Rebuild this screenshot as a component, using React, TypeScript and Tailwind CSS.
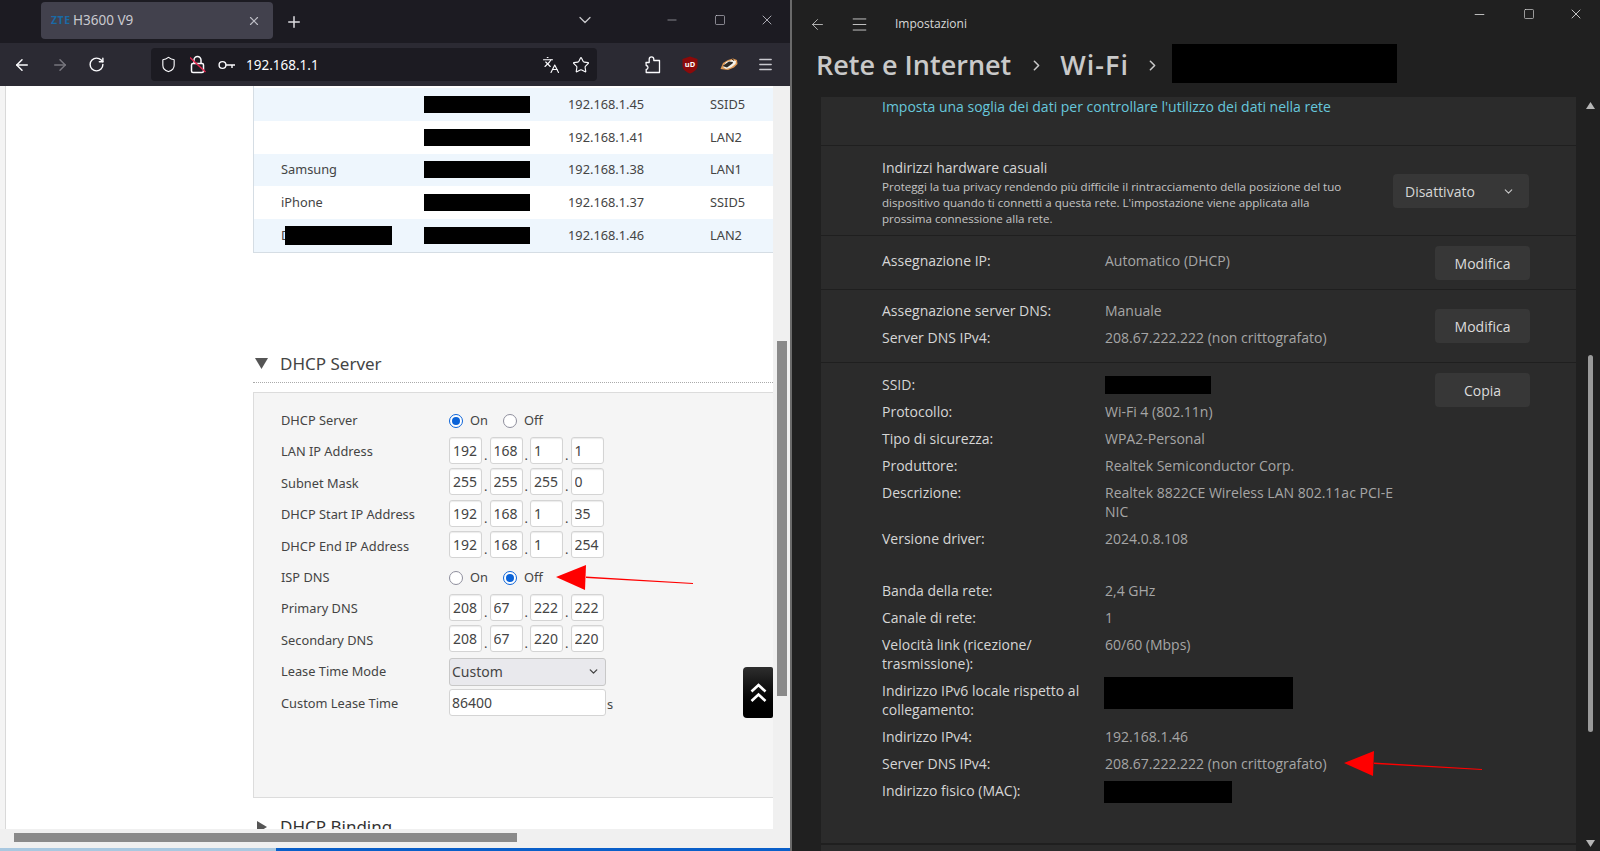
import React from "react";
import { ArrowLeft, ArrowRight, ChevronDown, ChevronRight, Languages, Menu, Minus, Plus, RotateCw, Shield, Square, Star, X } from "lucide-react";

const Black = ({ className }: { className: string }) => <div className={`bg-black ${className}`} />;

function Radio({ on, label }: { on: boolean; label: string }) {
  return (
    <div className="flex items-center w-[54px]">
      <span className={`w-[14px] h-[14px] rounded-full border-[1.5px] flex items-center justify-center bg-white ${on ? "border-[#0b63d8]" : "border-[#8f8f9d]"}`}>
        {on && <span className="w-[8px] h-[8px] rounded-full bg-[#0b63d8]" />}
      </span>
      <span className="ml-[7px]">{label}</span>
    </div>
  );
}

function IpInputs({ v }: { v: string[] }) {
  return (
    <div className="flex items-center -mt-[3px]">
      {v.map((x, i) => (
        <React.Fragment key={i}>
          {i > 0 && <span className="w-[7.5px] text-center self-end leading-[18px]">.</span>}
          <input readOnly value={x} className="w-[33px] h-[27px] bg-white border border-[#d4d4d4] rounded-[3px] px-[3px] text-[14px] text-[#444] shadow-[inset_0_1px_1px_rgba(0,0,0,0.08)] outline-none" />
        </React.Fragment>
      ))}
    </div>
  );
}

function FormRow({ label, children }: { label: string; children: React.ReactNode }) {
  return (
    <div className="flex items-center h-[31.4px]">
      <div className="w-[168px]">{label}</div>
      {children}
    </div>
  );
}

function TableRow({ shade, name, ip, port, redactName }: { shade: boolean; name?: string; ip: string; port: string; redactName?: boolean }) {
  return (
    <div className={`flex items-center h-[32.8px] ${shade ? "bg-[#eef6fd]" : "bg-white"}`}>
      <div className="w-[170px] pl-[27px] relative">
        {name}
        {redactName && <Black className="absolute left-[31px] top-0 w-[107px] h-[19px]" />}
      </div>
      <Black className="w-[106px] h-[17px]" />
      <div className="ml-[38px] w-[142px]">{ip}</div>
      <div>{port}</div>
    </div>
  );
}

function Kv({ label, value, children }: { label: string; value?: string; children?: React.ReactNode }) {
  return (
    <div className="flex py-[4px] leading-[19px]">
      <div className="w-[223px] pr-[20px] text-[#d6d6d6]">{label}</div>
      <div className="w-[290px] text-[#a6a6a6]">
        {value}
        {children}
      </div>
    </div>
  );
}

const Btn = ({ label }: { label: string }) => (
  <div className="w-[95px] h-[34px] rounded-[4px] bg-[#373737] text-[#dcdcdc] flex items-center justify-center shrink-0">{label}</div>
);

function Arrow({ className, w, h, tail }: { className: string; w: number; h: number; tail: [number, number] }) {
  return (
    <svg className={`absolute ${className}`} width={w} height={h} viewBox={`0 0 ${w} ${h}`}>
      <polygon points={`30,${h / 2 - 1} ${tail[0]},${tail[1]} ${tail[0]},${tail[1] + 1} 30,${h / 2 + 0.5}`} fill="#ff0000" />
      <polygon points="0,12 30,0 29,25" fill="#ff0000" />
    </svg>
  );
}

export default function App() {
  return (
    <div className="relative w-[1600px] h-[851px] flex overflow-hidden bg-[#202020] text-[13px] font-['Noto_Sans','Open_Sans',sans-serif]">
      {/* Browser window */}
      <div className="w-[790px] h-[851px] flex flex-col shrink-0">
        <div className="h-[43px] bg-[#1c1b22] flex items-start text-[#cfcfd8] shrink-0">
          <div className="ml-[41px] mt-[2px] w-[232px] h-[37px] rounded-[4px] bg-[#42414d] flex items-center pl-[10px] pr-[12px]">
            <span className="text-[#1a6aa5] font-bold text-[10.5px] tracking-[0.5px] w-[22px]">ZTE</span>
            <span className="text-[13.5px] text-[#c9c9d0] flex-1">H3600 V9</span>
            <X size={14} className="text-[#bdbdc5]" />
          </div>
          <Plus size={18} className="ml-[12px] mt-[13px] text-[#dcdce0]" />
          <ChevronDown size={20} className="ml-[272px] mt-[10px] text-[#c8c8cc]" strokeWidth={1.5} />
          <Minus size={14} className="ml-[70px] mt-[13px]" strokeWidth={1} />
          <Square size={12} className="ml-[35px] mt-[14px]" strokeWidth={1.2} />
          <X size={16} className="ml-[33px] mt-[12px]" strokeWidth={1.2} />
        </div>
        <div className="h-[43px] bg-[#2b2a33] flex items-center text-[#fbfbfe] shrink-0">
          <ArrowLeft size={18} className="ml-[13px]" />
          <ArrowRight size={18} className="ml-[20px] text-[#77767e]" />
          <RotateCw size={17} className="ml-[19px]" />
          <div className="ml-[46px] w-[446px] h-[33px] bg-[#1c1b22] rounded-[4px] flex items-center">
            <Shield size={17} className="ml-[9px]" strokeWidth={1.6} />
            <svg className="ml-[13px]" width="16" height="19" viewBox="0 0 16 19" fill="none">
              <rect x="1.5" y="8.5" width="12" height="9" rx="1.5" stroke="#fbfbfe" strokeWidth="1.5" />
              <path d="M4 8.5V5a3.5 3.5 0 0 1 7 0v3.5" stroke="#fbfbfe" strokeWidth="1.5" />
              <path d="M0 2.5L15.5 17" stroke="#e22850" strokeWidth="1.5" />
            </svg>
            <svg className="ml-[12px]" width="18" height="10" viewBox="0 0 18 10" fill="none">
              <circle cx="4.5" cy="5" r="3.4" stroke="#fbfbfe" strokeWidth="1.4" />
              <path d="M8 5H17M14 5V8" stroke="#fbfbfe" strokeWidth="1.4" />
            </svg>
            <span className="ml-[10px] mt-[1px] text-[13.5px] flex-1">192.168.1.1</span>
            <Languages size={18} strokeWidth={1.5} />
            <Star size={18} className="ml-[12px] mr-[7px]" strokeWidth={1.5} />
          </div>
          <svg className="ml-[48px]" width="16" height="18" viewBox="0 0 16 18" fill="none" stroke="#fbfbfe" strokeWidth="1.3" strokeLinejoin="round">
            <path d="M1 6.5h3.2V3.2a2.3 2.3 0 0 1 4.6 0v1.3H14.5V16.5H1.2v-3a2 2 0 0 0 1.8-2a2 2 0 0 0-1.8-2z" />
          </svg>
          <svg className="ml-[21px]" width="16" height="18" viewBox="0 0 16 18">
            <path d="M8 0.5L15.5 3V9.5C15.5 13.5 12 16 8 17.5C4 16 0.5 13.5 0.5 9.5V3z" fill="#8b0a0a" />
            <text x="8" y="11" textAnchor="middle" fontSize="7.5" fontWeight="700" fill="#fff">uD</text>
          </svg>
          <svg className="ml-[22px]" width="18" height="13" viewBox="0 0 18 13">
            <path d="M0.5 11L3 5L8 2L13 0.5L17 2L17.5 6L14 9.5L8 12z" fill="#e09a55" />
            <path d="M3 9L6 4L12 2L16 3L15.5 6L11 9.5L6 11z" fill="#f4f2ec" />
            <path d="M2.5 8L9 3.5L13 4L12.5 5.5L7 9.5z" fill="#2e2a26" />
            <path d="M12 1L14 2.5" stroke="#2e2a26" strokeWidth="1" />
          </svg>
          <Menu size={17} className="ml-[19px] text-[#c9c9cf]" strokeWidth={2} />
        </div>

        {/* Page */}
        <div className="relative h-[743px] flex bg-white text-[#444] text-[12.8px] overflow-hidden shrink-0">
          <div className="w-[6px] bg-[#f4f4f4] border-r border-[#d9d9d9] shrink-0" />
          <div className="w-[247px] shrink-0" />
          <div className="w-[520px] shrink-0">
            <div className="border-l border-b border-[#d5dde4] pt-[2px]">
              <TableRow shade ip="192.168.1.45" port="SSID5" />
              <TableRow shade={false} ip="192.168.1.41" port="LAN2" />
              <TableRow shade name="Samsung" ip="192.168.1.38" port="LAN1" />
              <TableRow shade={false} name="iPhone" ip="192.168.1.37" port="SSID5" />
              <TableRow shade name="D" redactName ip="192.168.1.46" port="LAN2" />
            </div>
            <div className="mt-[95px] h-[35px] pb-[2px] flex items-center border-b border-dotted border-[#aaa] text-[17px] text-[#444]">
              <svg className="ml-[2px]" width="13" height="11" viewBox="0 0 13 11"><polygon points="0,0 13,0 6.5,11" fill="#555" /></svg>
              <span className="ml-[12px]">DHCP Server</span>
            </div>
            <div className="mt-[9px] h-[406px] bg-[#f5f5f5] border-l border-t border-b border-[#dcdcdc] pl-[27px] pt-[12px]">
              <FormRow label="DHCP Server">
                <Radio on label="On" />
                <Radio on={false} label="Off" />
              </FormRow>
              <FormRow label="LAN IP Address"><IpInputs v={["192", "168", "1", "1"]} /></FormRow>
              <FormRow label="Subnet Mask"><IpInputs v={["255", "255", "255", "0"]} /></FormRow>
              <FormRow label="DHCP Start IP Address"><IpInputs v={["192", "168", "1", "35"]} /></FormRow>
              <FormRow label="DHCP End IP Address"><IpInputs v={["192", "168", "1", "254"]} /></FormRow>
              <FormRow label="ISP DNS">
                <Radio on={false} label="On" />
                <Radio on label="Off" />
              </FormRow>
              <FormRow label="Primary DNS"><IpInputs v={["208", "67", "222", "222"]} /></FormRow>
              <FormRow label="Secondary DNS"><IpInputs v={["208", "67", "220", "220"]} /></FormRow>
              <FormRow label="Lease Time Mode">
                <div className="w-[157px] h-[28px] bg-[#e9e9ed] border border-[#c8c8c8] rounded-[3px] flex items-center justify-between pl-[2px] pr-[5px] text-[14px]">
                  <span>Custom</span>
                  <ChevronDown size={13} strokeWidth={2.5} />
                </div>
              </FormRow>
              <FormRow label="Custom Lease Time">
                <input readOnly value="86400" className="w-[157px] h-[27px] -mt-[2px] bg-white border border-[#d4d4d4] rounded-[3px] px-[2px] text-[14px] text-[#444] outline-none" />
                <span className="ml-[1px] mt-[3px]">s</span>
              </FormRow>
            </div>
            <div className="mt-[19px] flex items-center text-[17px] h-[20px] text-[#333]">
              <svg className="ml-[4px]" width="10" height="12" viewBox="0 0 10 12"><polygon points="0,0 10,6 0,12" fill="#555" /></svg>
              <span className="ml-[13px]">DHCP Binding</span>
            </div>
          </div>
          <div className="w-[17px] bg-[#f0f0f0] shrink-0 pt-[255px] pl-[4px]">
            <div className="w-[10px] h-[355px] bg-[#8a8a8a]" />
          </div>
          <div className="absolute left-[743px] top-[581px] w-[30px] h-[51px] rounded-l-[4px] rounded-r-[2px] bg-gradient-to-b from-[#2e2e2e] to-black flex items-center justify-center">
            <svg width="17" height="21" viewBox="0 0 17 21" fill="none" stroke="#fff" strokeWidth="2.6"><path d="M1.5 9.5L8.5 3L15.5 9.5M1.5 19L8.5 12.5L15.5 19" /></svg>
          </div>
        </div>
        <div className="h-[19px] bg-[#f0f0f0] pl-[14px] pt-[4px] shrink-0">
          <div className="w-[503px] h-[9px] bg-[#8a8a8a]" />
        </div>
        <div className="h-[3px] bg-gradient-to-r from-[#a9c8e0] via-[#a9c8e0] via-[35%] to-[#0a5fc9] to-[35%] shrink-0" />
      </div>

      {/* Settings window */}
      <div className="w-[810px] h-[851px] border-l-2 border-[#6a6a6a] bg-[#202020] flex flex-col text-[14px] text-[#d6d6d6] font-['Open_Sans','Noto_Sans',sans-serif]">
        <div className="h-[39px] flex items-center shrink-0 pt-[9px]">
          <ArrowLeft size={17} className="ml-[17px] text-[#c8c8c8]" strokeWidth={1.2} />
          <Menu size={19} className="ml-[24px] text-[#c8c8c8]" strokeWidth={1.2} />
          <span className="ml-[26px] text-[12px] text-[#d8d8d8]">Impostazioni</span>
          <Minus size={15} className="ml-[505px] -mt-[20px] text-[#d0d0d0]" strokeWidth={1.4} />
          <Square size={12} className="ml-[36px] -mt-[20px] text-[#d0d0d0]" strokeWidth={1.4} />
          <X size={16} className="ml-[33px] -mt-[20px] text-[#d0d0d0]" strokeWidth={1.4} />
        </div>
        <div className="h-[54px] flex items-center pl-[24px] text-[27px] font-semibold text-[#c9c9c9] shrink-0 -mt-[1px] mb-[5px]">
          <span>Rete e Internet</span>
          <ChevronRight size={17} className="ml-[17px] text-[#c9c9c9]" strokeWidth={2.2} />
          <span className="ml-[15px] tracking-[1px]">Wi-Fi</span>
          <ChevronRight size={17} className="ml-[15px] text-[#c9c9c9]" strokeWidth={2.2} />
          <Black className="ml-[11px] w-[225px] h-[39px] -mt-[3px]" />
        </div>
        <div className="flex flex-1 min-h-0">
          <div className="ml-[29px] w-[755px] h-full flex flex-col">
            <div className="h-[48px] bg-[#2b2b2b] pl-[61px] text-[#67c7dc] leading-[19px] shrink-0">Imposta una soglia dei dati per controllare l'utilizzo dei dati nella rete</div>
            <div className="h-[90px] bg-[#2b2b2b] border-t border-[#1f1f1f] flex items-start pl-[61px] pr-[46px] shrink-0 pt-[12px]">
              <div className="w-[512px]">
                <div className="leading-[19px]">Indirizzi hardware casuali</div>
                <div className="w-[480px] text-[11.6px] leading-[16px] text-[#c4c4c4] mt-[2px]">Proteggi la tua privacy rendendo più difficile il rintracciamento della posizione del tuo dispositivo quando ti connetti a questa rete. L'impostazione viene applicata alla prossima connessione alla rete.</div>
              </div>
              <div className="mt-[16px] ml-[-1px] w-[136px] h-[34px] rounded-[4px] bg-[#373737] flex items-center justify-between pl-[12px] pr-[14px]">
                <span>Disattivato</span>
                <ChevronDown size={13} className="text-[#c8c8c8]" />
              </div>
            </div>
            <div className="h-[54px] bg-[#2b2b2b] border-t border-[#1f1f1f] flex pl-[61px] pr-[46px] shrink-0">
              <div className="flex-1 pt-[15px] leading-[19px] flex">
                <div className="w-[223px]">Assegnazione IP:</div>
                <div className="text-[#a6a6a6]">Automatico (DHCP)</div>
              </div>
              <div className="mt-[10px]"><Btn label="Modifica" /></div>
            </div>
            <div className="h-[73px] bg-[#2b2b2b] border-t border-[#1f1f1f] flex pl-[61px] pr-[46px] shrink-0">
              <div className="flex-1 pt-[11px] leading-[19px]">
                <div className="flex h-[27px]"><div className="w-[223px]">Assegnazione server DNS:</div><div className="text-[#a6a6a6]">Manuale</div></div>
                <div className="flex"><div className="w-[223px]">Server DNS IPv4:</div><div className="text-[#a6a6a6]">208.67.222.222 (non crittografato)</div></div>
              </div>
              <div className="mt-[19px]"><Btn label="Modifica" /></div>
            </div>
            <div className="h-[481px] bg-[#2b2b2b] border-t border-[#1f1f1f] flex pl-[61px] pr-[46px] pt-[8px] shrink-0">
              <div className="flex-1">
                <Kv label="SSID:"><Black className="w-[106px] h-[18px] mt-[0.5px]" /></Kv>
                <Kv label="Protocollo:" value="Wi-Fi 4 (802.11n)" />
                <Kv label="Tipo di sicurezza:" value="WPA2-Personal" />
                <Kv label="Produttore:" value="Realtek Semiconductor Corp." />
                <Kv label="Descrizione:" value="Realtek 8822CE Wireless LAN 802.11ac PCI-E NIC" />
                <Kv label="Versione driver:" value="2024.0.8.108" />
                <div className="h-[25px]" />
                <Kv label="Banda della rete:" value="2,4 GHz" />
                <Kv label="Canale di rete:" value="1" />
                <Kv label="Velocità link (ricezione/ trasmissione):" value="60/60 (Mbps)" />
                <Kv label="Indirizzo IPv6 locale rispetto al collegamento:"><Black className="w-[189px] h-[32px] -ml-[1px] -mt-[4px]" /></Kv>
                <Kv label="Indirizzo IPv4:" value="192.168.1.46" />
                <Kv label="Server DNS IPv4:" value="208.67.222.222 (non crittografato)" />
                <Kv label="Indirizzo fisico (MAC):"><Black className="w-[128px] h-[22px] -ml-[1px]" /></Kv>
              </div>
              <div className="mt-[2px]"><Btn label="Copia" /></div>
            </div>
            <div className="flex-1 bg-[#2b2b2b] border-t-2 border-[#1f1f1f]" />
          </div>
          <div className="ml-[9px] w-[11px] flex flex-col items-center">
            <svg className="mt-[5px]" width="9" height="7" viewBox="0 0 9 7"><polygon points="4.5,0 9,7 0,7" fill="#b5b5b5" /></svg>
            <div className="mt-[246px] w-[5px] h-[377px] rounded-full bg-[#9a9a9a]" />
            <svg className="mt-[108px]" width="9" height="7" viewBox="0 0 9 7"><polygon points="0,0 9,0 4.5,7" fill="#b5b5b5" /></svg>
          </div>
        </div>
      </div>

      <Arrow className="left-[556px] top-[565px]" w={138} h={25} tail={[137, 18]} />
      <Arrow className="left-[1344px] top-[751px]" w={139} h={25} tail={[138, 18]} />
    </div>
  );
}
